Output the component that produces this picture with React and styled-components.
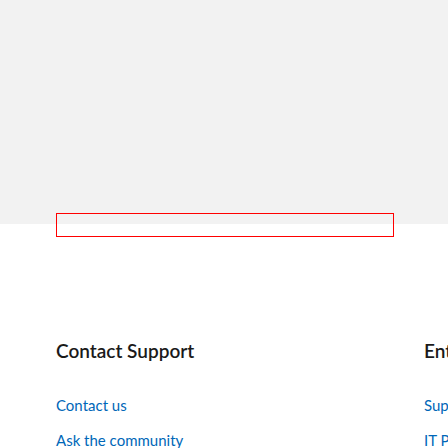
import React from "react";
import styled, { createGlobalStyle } from "styled-components";

const Global = createGlobalStyle`
  html, body { margin: 0; padding: 0; overflow: hidden; background: #fff; }
  body { font-family: Lato, "Open Sans", "Liberation Sans", sans-serif; }
`;

const Page = styled.div`
  width: 448px;
  height: 448px;
  overflow: hidden;
`;

const Band = styled.div`
  height: 224px;
  background: #f2f2f2;
`;

const Outline = styled.div`
  box-sizing: border-box;
  margin: -11px 0 0 56px;
  width: 338px;
  height: 24px;
  border: 1px solid #ff0000;
`;

const Columns = styled.div`
  display: grid;
  grid-template-columns: 368px 368px;
  padding: 101px 0 0 56px;
`;

const Column = styled.div`
  display: flex;
  flex-direction: column;
  white-space: nowrap;
`;

const Heading = styled.h2`
  margin: 0;
  font-size: 19px;
  line-height: 26px;
  font-weight: 600;
  color: #1a1a1a;
`;

const LinkList = styled.ul`
  list-style: none;
  margin: 30px 0 0;
  padding: 0;
  display: flex;
  flex-direction: column;
  gap: 13px;
`;

const Link = styled.a`
  display: block;
  font-size: 15px;
  line-height: 22px;
  font-weight: 400;
  color: #0067b8;
  text-decoration: none;
`;

const columns = [
  { title: "Contact Support", links: ["Contact us", "Ask the community"] },
  { title: "Enterprise support", links: ["Support for business", "IT Pros"] },
];

export default function App() {
  return (
    <Page>
      <Global />
      <Band />
      <Outline />
      <Columns>
        {columns.map((c) => (
          <Column key={c.title}>
            <Heading>{c.title}</Heading>
            <LinkList>
              {c.links.map((l) => (
                <li key={l}>
                  <Link href="#">{l}</Link>
                </li>
              ))}
            </LinkList>
          </Column>
        ))}
      </Columns>
    </Page>
  );
}
